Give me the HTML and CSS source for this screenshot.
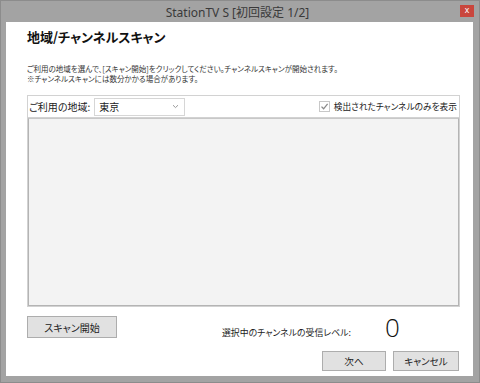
FILE: index.html
```html
<!DOCTYPE html>
<html lang="ja">
<head>
    <meta charset="UTF-8">
    <title>StationTV S [初回設定 1/2]</title>
    <link rel="stylesheet" href="styles.css">
</head>
<body>
    <div class="window">
        <!--타이틀바-->
        <div class="titlebar">
            <span class="ttl">StationTV S [初回設定 1/2]</span>
            <span class="close">x</span>
        </div>

        <!--본문-->
        <div class="panel">
            <h1 class="head">地域/チャンネルスキャン</h1>
            <p class="desc">
                ご利用の地域を選んで、[スキャン開始]をクリックしてください。チャンネルスキャンが開始されます。<br>
                ※チャンネルスキャンには数分かかる場合があります。
            </p>

            <div class="group">
                <div class="ghead">
                    <span class="lbl">ご利用の地域:</span>
                    <div class="combo">
                        <span>東京</span>
                        <svg width="7" height="5" viewBox="0 0 7 5"><path d="M1 1.2 L3.5 3.6 L6 1.2" fill="none" stroke="#9a9a9a" stroke-width="1"/></svg>
                    </div>
                    <label class="chk">
                        <span class="box">
                            <svg width="9" height="9" viewBox="0 0 9 9"><path d="M1.5 4.6 L3.6 6.8 L7.6 1.8" fill="none" stroke="#8a8a8a" stroke-width="1.3"/></svg>
                        </span>
                        検出されたチャンネルのみを表示
                    </label>
                </div>
                <div class="list"></div>
            </div>

            <div class="row1">
                <button class="btn scan">スキャン開始</button>
                <div class="level">
                    <span class="llbl">選択中のチャンネルの受信レベル:</span>
                    <span class="val">0</span>
                </div>
            </div>

            <div class="row2">
                <button class="btn next">次へ</button>
                <button class="btn cancel">キャンセル</button>
            </div>
        </div>
    </div>
</body>
</html>
```

FILE: styles.css
```css
html,
body,
h1,
p {
    margin: 0;
    padding: 0;
}

body {
    font-family: "Noto Sans CJK JP", "Noto Sans", sans-serif;
    color: #222;
}

/*창 전체*/
.window {
    width: 480px;
    height: 383px;
    box-sizing: border-box;
    border: 1px solid #8c8c8c;
    background-color: #a3a3a3;
    display: flex;
    flex-direction: column;
}

/*타이틀바*/
.titlebar {
    height: 21px;
    display: grid;
    grid-template-columns: 1fr auto 1fr;
    padding-right: 5px;
}

.ttl {
    grid-column: 2;
    font-family: "Noto Sans", "Noto Sans CJK JP", sans-serif;
    font-size: 12px;
    line-height: 23px;
    color: #3a3a3a;
}

.close {
    grid-column: 3;
    justify-self: end;
    margin-top: 4px;
    width: 14px;
    height: 12px;
    background-color: #c9463d;
    color: #fff;
    font-family: "Liberation Sans", sans-serif;
    font-size: 9px;
    line-height: 11px;
    text-align: center;
}

/*흰 패널*/
.panel {
    flex: 1;
    margin: 0 6px 6px 5px;
    background-color: #fff;
    padding: 7px 13px 0 21px;
    display: flex;
    flex-direction: column;
    font-feature-settings: "palt";
}

.head {
    font-size: 13px;
    line-height: 16px;
    font-weight: bold;
    color: #111;
}

.desc {
    margin-top: 19px;
    font-size: 7.5px;
    line-height: 10px;
    color: #333;
}

/*그룹박스*/
.group {
    margin-top: 11px;
    border: 1px solid #d2d2d2;
    height: 210px;
    display: flex;
    flex-direction: column;
}

.ghead {
    height: 21px;
    display: flex;
    align-items: center;
    padding-left: 1px;
    padding-right: 2px;
    border-bottom: 1px solid #d2d2d2;
}

.lbl {
    font-size: 10px;
}

.combo {
    margin-left: 4px;
    height: 18px;
    border: 1px solid #d6d6d6;
    display: flex;
    align-items: center;
    justify-content: space-between;
    padding: 0 5px 0 4px;
    box-sizing: border-box;
    width: 91px;
    font-size: 10px;
}

.chk {
    margin-left: auto;
    display: flex;
    align-items: center;
    font-size: 8.7px;
}

.box {
    width: 9px;
    height: 9px;
    border: 1px solid #c8c8c8;
    margin-right: 4px;
    display: flex;
}

.list {
    flex: 1;
    background-color: #f3f3f3;
    border: 1px solid #b4b4b4;
    border-top-color: #c8c8c8;
}

/*버튼*/
.btn {
    font-family: "Noto Sans CJK JP", sans-serif;
    font-feature-settings: "palt";
    background-color: #e1e1e1;
    border: 1px solid #adadad;
    color: #222;
    padding: 0;
    font-size: 9.6px;
}

.row1 {
    margin-top: 8px;
    display: flex;
    align-items: center;
}

.scan {
    width: 90px;
    height: 22px;
    font-size: 10px;
}

.level {
    margin-left: 105px;
    display: flex;
    align-items: center;
}

.llbl {
    font-size: 8.9px;
    margin-top: 10px;
}

.val {
    width: 67px;
    margin-left: 8px;
    text-align: center;
    font-family: "Open Sans", sans-serif;
    font-weight: 300;
    font-size: 26px;
    line-height: 24px;
    color: #111;
}

.row2 {
    margin-top: 12px;
    display: flex;
    justify-content: flex-end;
    gap: 7px;
    padding-right: 1px;
}

.next {
    width: 64px;
    height: 20px;
}

.cancel {
    width: 66px;
    height: 20px;
}
```
